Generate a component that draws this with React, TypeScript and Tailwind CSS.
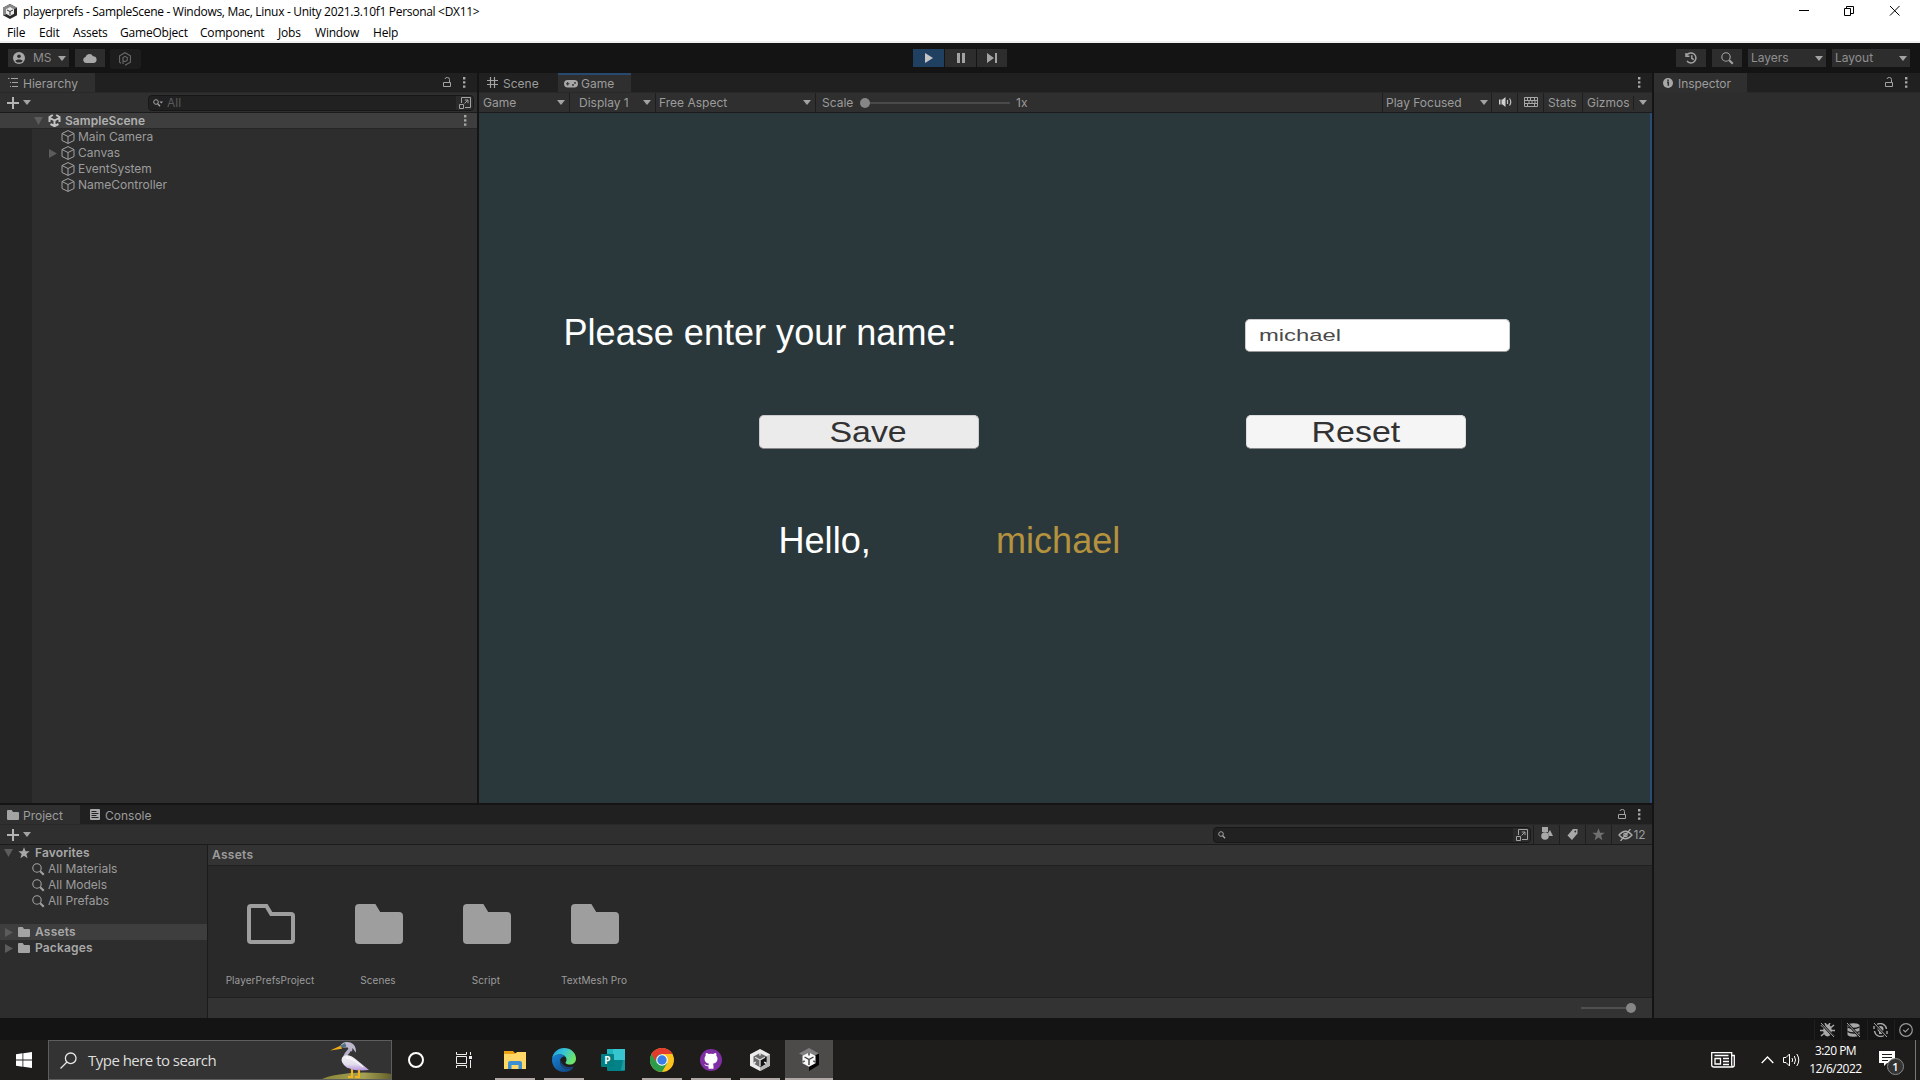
import React from "react";

type P = { className?: string };

const Caret = ({ className = "" }: P) => (
  <svg className={"shrink-0 " + className} width="8" height="5" viewBox="0 0 8 5"><path d="M0 0h8L4 5z" fill="#a3a3a3" /></svg>
);
const TriDown = () => (<svg className="shrink-0" width="9" height="8" viewBox="0 0 9 8"><path d="M0 0h9L4.5 8z" fill="#5c5c5c" /></svg>);
const TriRight = () => (<svg className="shrink-0" width="8" height="9" viewBox="0 0 8 9"><path d="M0 0v9l8-4.5z" fill="#5c5c5c" /></svg>);
const Dots = ({ className = "" }: P) => (
  <svg className={"shrink-0 " + className} width="3" height="11" viewBox="0 0 3 11" fill="#a8a8a8"><path d="M0 0h2.4v2.4H0zM0 4.2h2.4v2.4H0zM0 8.4h2.4v2.4H0z" /></svg>
);
const Lock = ({ className = "" }: P) => (
  <svg className={"shrink-0 " + className} width="8" height="11" viewBox="0 0 8 11" fill="none" stroke="#a3a3a3"><path d="M.5 5.500h7v4h-7zM6.500 5.500V2.500a2 2 0 0 0-2-2h-.5a2 2 0 0 0-2 1.500" /></svg>
);
const Plus = () => (<svg className="shrink-0" width="12" height="12" viewBox="0 0 12 12"><path d="M6 0v12M0 6h12" stroke="#b4b4b4" strokeWidth="2" /></svg>);
const Cube = () => (
  <svg className="shrink-0" width="14" height="14" viewBox="0 0 14 14" fill="none" stroke="#a3a3a3" strokeLinejoin="round"><path d="M7 .6l6 2.9v7L7 13.4l-6-2.9v-7zM1 3.5l6 3 6-3M7 6.5v6.9" /></svg>
);
const Mag = ({ className = "", s = 13, c = "#a3a3a3" }: P & { s?: number; c?: string }) => (
  <svg className={"shrink-0 " + className} width={s} height={s} viewBox="0 0 13 13" fill="none" stroke={c}><circle cx="5" cy="5" r="4.2" strokeWidth="1.1" /><path d="M8.2 8.2l3.6 3.6" strokeWidth="2" /></svg>
);
const FolderSm = ({ className = "" }: P) => (
  <svg className={"shrink-0 " + className} width="12" height="10" viewBox="0 0 12 10" fill="#a3a3a3"><path d="M0 1a1 1 0 0 1 1-1h3.7L6 2h5a1 1 0 0 1 1 1v6a1 1 0 0 1-1 1H1a1 1 0 0 1-1-1z" /></svg>
);
const Popout = () => (
  <svg className="shrink-0" width="12" height="12" viewBox="0 0 12 12" fill="none" stroke="#a3a3a3"><path d="M2.5 6V.5h9v10H6M.5 7.5h4v4h-4zM5.5 6.5L9 3M5.8 3h3.2v3.2" /></svg>
);
const Star = ({ c = "#a8a8a8", s = 12 }: { c?: string; s?: number }) => (
  <svg className="shrink-0" width={s} height={s} viewBox="0 0 12 12" fill={c}><path d="M6 .3l1.6 4h4.1L8.4 6.9l1.2 4.4L6 8.8l-3.6 2.5 1.2-4.4L.3 4.3h4.1z" /></svg>
);
const UnityMark = () => (
  <svg className="shrink-0" width="13" height="13" viewBox="0 0 13 13" fill="none" stroke="#c4c4c4" strokeWidth="2"><path d="M6.5 6.5V12M6.5 6.5L2 4M6.5 6.5L11 4M4.8 1L1.5 3v5M8.2 1l3.3 2v5M2.5 10l4 2.2 4-2.2" /></svg>
);
const BigFolder = ({ open = false }: { open?: boolean }) => (
  <svg width="48" height="40" viewBox="0 0 48 40">
    {open ? (
      <path d="M2 4a2 2 0 0 1 2-2h15.4l4.8 8H44a2 2 0 0 1 2 2v24a2 2 0 0 1-2 2H4a2 2 0 0 1-2-2z" fill="none" stroke="#9e9e9e" strokeWidth="4" />
    ) : (
      <path d="M0 4a4 4 0 0 1 4-4h16.4l4.8 8H44a4 4 0 0 1 4 4v24a4 4 0 0 1-4 4H4a4 4 0 0 1-4-4z" fill="#9e9e9e" />
    )}
  </svg>
);

/* Unity Hub: pale hexagon frame around a dark cube */
const HubIcon = () => (
  <svg className="shrink-0" width="20" height="22" viewBox="0 0 20 22">
    <path d="M10 0l10 5.300v11.400L10 22 0 16.700V5.300z" fill="#ececec" />
    <path d="M20 5.300v11.400L10 22v-5l6-3.300V7.500z" fill="#b5b5b5" />
    <path d="M10 4l6.500 3.600v7L10 18.200l-6.500-3.600v-7z" fill="#6a6a6a" />
    <path d="M10 11l6.500-3.400v7L10 18.200z" fill="#111" />
    <path d="M10 11v6.500M10 11L5 8.200M10 11l5-2.800" stroke="#ddd" strokeWidth="1.300" />
    <path d="M10 4v2.600M3.500 14.500l2.300-1.400M16.500 14.500l-2.300-1.400" stroke="#ececec" strokeWidth="1.500" />
  </svg>
);

/* Unity Editor: white cube with a grey roof and a hard black shadow */
const EditorIcon = () => (
  <svg className="shrink-0" width="20" height="23" viewBox="0 0 20 23">
    <path d="M10 0l10 5.500-4 2L10 4.500 4 7.500l-4-2z" fill="#808080" />
    <path d="M20 5.500V17l-10 6v-5l6-3.500v-7z" fill="#050505" />
    <path d="M10 4.500l6.500 3.300v7.400L10 18.700l-6.500-3.500V7.800z" fill="#f8f8f8" />
    <path d="M10 11.500V17M10 11.500L5.500 9M10 11.500L14.500 9" stroke="#3c3c3c" strokeWidth="1.400" />
    <path d="M10 4.500v3M3.500 14l2.200-1M16.500 14l-2.200-1" stroke="#555" strokeWidth="1.600" />
  </svg>
);

const TitleIcon = () => (
  <svg className="ml-[3px] shrink-0" width="14" height="15" viewBox="0 0 14 15">
    <path d="M7 0l7 3.8v7.4L7 15l-7-3.8V3.8z" fill="#292929" />
    <path d="M0 3.8L7 0l7 3.8-3 1.5-4-1.6-4 2v5L0 11z" fill="#888" />
    <path d="M7 3l4 2.2v4.6L7 12 3 9.8V5.2z" fill="#ececec" />
    <path d="M7 7.5V11M7 7.5L4 6M7 7.5L10 6" stroke="#333" strokeWidth="1" />
  </svg>
);

function TitleBar() {
  const menus: [string, string][] = [
    ["File", "w-[32px]"], ["Edit", "w-[34px]"], ["Assets", "w-[47px]"], ["GameObject", "w-[80px]"],
    ["Component", "w-[78px]"], ["Jobs", "w-[37px]"], ["Window", "w-[58px]"], ["Help", "w-[40px]"],
  ];
  return (
    <header className="h-[43px] shrink-0 border-b-2 border-[#f0f0f0] bg-white font-['Open_Sans',sans-serif] text-[12px] text-black">
      <div className="flex h-[22px] items-center">
        <TitleIcon />
        <span className="ml-[6px] tracking-[-0.300px] whitespace-nowrap pt-[2px]">playerprefs - SampleScene - Windows, Mac, Linux - Unity 2021.3.10f1 Personal &lt;DX11&gt;</span>
        <svg className="mr-[19px] ml-auto" width="102" height="12" viewBox="0 0 102 12" fill="none" stroke="#000">
          <path d="M0 5.5h10M45.5 3.5h6v7h-6zM47.5 3.5v-2h7v7h-3M91 1l9.5 9.5M100.500 1L91 10.500" />
        </svg>
      </div>
      <div className="flex h-[19px] items-center pl-[7px]">
        {menus.map(([m, w]) => (<span key={m} className={"shrink-0 whitespace-nowrap tracking-[-0.200px] pt-[3px] " + w}>{m}</span>))}
      </div>
    </header>
  );
}

function MainToolbar() {
  return (
    <div className="grid h-[30px] shrink-0 grid-cols-[913px_94px_1fr] items-start bg-[#141414] pt-[6px] text-[12px] text-[#8f8f8f]">
      <div className="flex pl-2">
        <div className="flex h-[18px] w-[61px] items-center bg-[#2d2d2d] pl-[5px]">
          <svg width="12" height="12" viewBox="0 0 12 12"><circle cx="6" cy="6" r="6" fill="#a8a8a8" /><circle cx="6" cy="4.3" r="1.8" fill="#2d2d2d" /><path d="M2.300 9c1-2 6.400-2 7.400 0-1.800 2-5.600 2-7.400 0z" fill="#2d2d2d" /></svg>
          <span className="ml-2 w-[25px]">MS</span><Caret />
        </div>
        <div className="ml-[6px] flex h-[18px] w-[30px] items-center justify-center bg-[#2d2d2d]">
          <svg width="14" height="10" viewBox="0 0 14 10" fill="#a8a8a8"><path d="M3 10a3 3 0 0 1-.5-5.900A4 4 0 0 1 10 3.300a3.400 3.400 0 0 1 1 6.700z" /></svg>
        </div>
        <div className="ml-[5px] flex h-[20px] w-[31px] items-center justify-center rounded-[3px] bg-[#1d1d1d]">
          <svg className="-translate-x-px" width="12" height="14" viewBox="0 0 12 14" fill="none" stroke="#6a6a6a" strokeWidth="1.100"><path d="M2 11.300L.6 10.300v-6.600L6 .700l5.400 3v6.600L6 13.300M4 12V5.500L6 4.300l2.200 1.200v3L6 9.700 4 8.600" /></svg>
        </div>
      </div>
      <div className="flex gap-px">
        <div className="flex h-[18px] w-[31px] items-center justify-center bg-[#1f4061]"><svg width="8" height="10" viewBox="0 0 8 10"><path d="M0 0v10l8-5z" fill="#c4c4c4" /></svg></div>
        <div className="flex h-[18px] w-[31px] items-center justify-center bg-[#2d2d2d]"><svg width="8" height="10" viewBox="0 0 8 10"><path d="M0 0h3v10H0zM5 0h3v10H5z" fill="#a3a3a3" /></svg></div>
        <div className="flex h-[18px] w-[30px] items-center justify-center bg-[#2d2d2d]"><svg width="10" height="10" viewBox="0 0 10 10"><path d="M0 0v10l7-5zM8 0h2v10H8z" fill="#a3a3a3" /></svg></div>
      </div>
      <div className="flex justify-end gap-[6px] pr-[10px]">
        <div className="flex h-[18px] w-[30px] items-center justify-center bg-[#2d2d2d]">
          <svg width="13" height="12" viewBox="0 0 13 12" fill="none" stroke="#a3a3a3" strokeWidth="1.500"><path d="M1.700 3.200A5 5 0 1 1 2 9M1 1v3.200h3.500M6.800 3.300v3l2 1.300" /></svg>
        </div>
        <div className="flex h-[18px] w-[30px] items-center justify-center bg-[#2d2d2d]"><Mag /></div>
        <div className="flex h-[18px] w-[78px] items-center justify-between bg-[#2d2d2d] pr-[3px] pl-[3px]"><span>Layers</span><Caret /></div>
        <div className="flex h-[18px] w-[78px] items-center justify-between bg-[#2d2d2d] pr-[3px] pl-[3px]"><span>Layout</span><Caret /></div>
      </div>
    </div>
  );
}

const SearchSmall = ({ caret = false }: { caret?: boolean }) => (
  <svg className="shrink-0" width="10" height="8" viewBox="0 0 10 8" fill="none" stroke="#a3a3a3"><circle cx="3" cy="3" r="2.300" /><path d="M4.700 4.700L7 7.200" strokeWidth="1.300" />{caret && <path d="M6.500 2.500h3.500L8.250 4.500z" fill="#a3a3a3" stroke="none" />}</svg>
);

function Hierarchy() {
  const rows = [["Main Camera", false], ["Canvas", true], ["EventSystem", false], ["NameController", false]] as const;
  return (
    <section className="flex w-[477px] shrink-0 flex-col bg-[#2d2d2d] text-[#9c9c9c]">
      <div className="flex h-[19px] items-center bg-[#202020]">
        <div className="flex h-[19px] w-[95px] items-center bg-[#2f2f2f] pl-2">
          <svg width="10" height="9" viewBox="0 0 10 9" stroke="#a3a3a3"><path d="M0 .5h1.500M3 .5h7M2 4.500h1M4 4.500h6M2 8.500h1M4 8.500h6" /></svg>
          <span className="ml-[5px] pt-[2px]">Hierarchy</span>
        </div>
        <Lock className="ml-auto" /><Dots className="mr-[11px] ml-[12px]" />
      </div>
      <div className="flex h-[21px] items-center border-t border-b border-t-[#292929] border-b-[#1b1b1b] bg-[#2f2f2f] pl-[7px]">
        <Plus /><Caret className="ml-[4px]" />
        <div className="ml-[117px] flex h-[16px] w-[326px] items-center overflow-hidden rounded-[4px] border border-[#171717] bg-[#212121] pl-1 text-[#5a5a5a]">
          <SearchSmall caret /><span className="ml-[4px]">All</span>
          <div className="ml-auto flex h-[15px] w-[17px] items-center justify-center bg-[#2b2b2b]"><Popout /></div>
        </div>
      </div>
      <div className="flex grow">
        <div className="flex w-full flex-col bg-[linear-gradient(to_right,#252525_32px,#2d2d2d_32px)]">
          <div className="flex h-[16px] items-center border-b border-[#262626] bg-[#3e3e3e] pl-[34px] font-semibold text-[#b0b0b0]">
            <TriDown /><span className="w-[5px]" /><UnityMark /><span className="ml-1 tracking-[0.050px]">SampleScene</span><Dots className="mr-[10px] ml-auto" />
          </div>
          {rows.map(([name, exp]) => (
            <div key={name} className="flex h-[16px] items-center pl-[49px]">
              <span className="w-[12px]">{exp && <TriRight />}</span><Cube /><span className="ml-[3px]">{name}</span>
            </div>
          ))}
        </div>
      </div>
    </section>
  );
}

function GameView() {
  return (
    <section className="flex w-[1173px] shrink-0 flex-col bg-[#2a383c] text-[#9c9c9c]">
      <div className="flex h-[19px] items-center bg-[#202020]">
        <div className="flex w-[79px] items-center pl-2">
          <svg width="11" height="11" viewBox="0 0 11 11" stroke="#a3a3a3" strokeWidth="1.200"><path d="M3.500 0v11M7.500 0v11M0 3.500h11M0 7.500h11" /></svg>
          <span className="ml-[5px] pt-[2px]">Scene</span>
        </div>
        <div className="flex h-[19px] w-[73px] items-center border-t-2 border-[#27496d] bg-[#2f2f2f] pl-[6px]">
          <svg width="14" height="8" viewBox="0 0 14 8"><rect width="14" height="7.500" rx="3.700" fill="#a8a8a8" /><path d="M2 3.800h3.400M3.700 2v3.500" stroke="#2d2d2d" strokeWidth="1" /><circle cx="9" cy="5" r=".9" fill="#2d2d2d" /><circle cx="11" cy="2.900" r=".9" fill="#2d2d2d" /></svg>
          <span className="ml-[3px] pt-px">Game</span>
        </div>
        <Dots className="mr-[11px] ml-auto" />
      </div>
      <div className="flex h-[21px] items-stretch border-t border-b border-t-[#292929] border-b-[#1b1b1b] bg-[#2f2f2f] text-[12px] *:flex *:shrink-0 *:items-center *:border-[#1e1e1e]">
        <div className="w-[91px] justify-between border-r pr-1 pl-1"><span>Game</span><Caret /></div>
        <div className="w-[86px] justify-between border-r pr-1 pl-[9px]"><span>Display 1</span><Caret /></div>
        <div className="w-[160px] justify-between border-r pr-1 pl-[3px]"><span>Free Aspect</span><Caret /></div>
        <div className="pl-[6px]">
          <span className="w-[38px]">Scale</span>
          <span className="h-[10px] w-[10px] rounded-full bg-[#868686]" /><span className="h-[2px] w-[140px] bg-[#4a4a4a]" />
          <span className="ml-[6px]">1x</span>
        </div>
        <div className="ml-auto w-[110px] justify-between border-r border-l pr-[3px] pl-[3px]"><span>Play Focused</span><Caret /></div>
        <div className="w-[26px] justify-center border-r">
          <svg className="translate-x-px -translate-y-px" width="13" height="10" viewBox="0 0 13 10"><path d="M0 2.500h1.500v5H0zM2.500 2.500h1L6.500 0v10L3.500 7.500h-1z" fill="#d0d0d0" /><path d="M8.500 3v4M10.500 1.500q2.500 3.500 0 7" stroke="#c0c0c0" fill="none" strokeWidth="1.200" /></svg>
        </div>
        <div className="w-[26px] justify-center border-r">
          <svg className="-translate-y-px" width="14" height="10" viewBox="0 0 14 10" fill="none" stroke="#a8a8a8"><path d="M.5.500h13v9H.5zM.5 3.500h13M.5 6.500h13M3.500.500v3M6.500.500v3M10.500.500v3M5 3.500v3M8 3.500v3M11 3.500v3M3.500 6.500v3M10.500 6.500v3" /></svg>
        </div>
        <div className="w-[39px] border-r pl-[4px]">Stats</div>
        <div className="w-[69px] pl-[4px]"><span className="w-[46px]">Gizmos</span><span className="h-[14px] w-px bg-[#1e1e1e]" /><Caret className="ml-[5px]" /></div>
      </div>
      <div className="flex grow flex-col border-r-2 border-[#2c4a78] bg-[#2a383c] pt-[205px] font-['Liberation_Sans',sans-serif]">
        <div className="flex h-[34px] items-center">
          <span className="ml-[84.500px] w-[681.500px] pb-[4px] text-[36.100px] leading-[34px] whitespace-nowrap text-white">Please enter your name:</span>
          <div className="flex h-[33px] w-[265px] items-center rounded-[5px] border border-b-[#999] border-[#ccc] bg-white pt-px pl-[13px] text-[17px] text-[#4a4a4a]">
            <span className="inline-block origin-left scale-x-[1.400]">michael</span>
          </div>
        </div>
        <div className="mt-[63px] flex h-[34px] items-center pl-[279.500px]">
          <button className="flex h-[34px] w-[220px] items-center justify-center rounded-[5px] border border-[#ccc] border-b-[#888] bg-[#ebebeb] pt-px text-[29px] leading-none text-[#323232]"><span className="inline-block scale-x-[1.170]">Save</span></button>
          <button className="ml-[267px] flex h-[34px] w-[220px] items-center justify-center rounded-[5px] border border-[#ddd] border-b-[#888] bg-[#f5f5f5] pt-px text-[29px] leading-none text-[#323232]"><span className="inline-block scale-x-[1.170]">Reset</span></button>
        </div>
        <div className="mt-[72px] flex pl-[299.500px] text-[36.100px] leading-[40px]">
          <span className="w-[217.500px] text-white">Hello,</span><span className="text-[#b4923e]">michael</span>
        </div>
      </div>
    </section>
  );
}

function Project() {
  return (
    <section className="flex h-[213px] flex-col bg-[#2d2d2d] text-[#9c9c9c]">
      <div className="flex h-[19px] items-center bg-[#202020]">
        <div className="flex h-[19px] w-[80px] items-center bg-[#2f2f2f] pl-[7px]"><FolderSm /><span className="ml-1 pt-[2px]">Project</span></div>
        <svg className="ml-[10px]" width="10" height="11" viewBox="0 0 10 11"><rect width="10" height="11" rx="1" fill="#a8a8a8" /><path d="M1.500 2.500h5M1.500 4.500h7M1.500 6.500h5M1.500 8.500h7" stroke="#222" /></svg>
        <span className="ml-[5px] pt-[2px]">Console</span>
        <Lock className="ml-auto" /><Dots className="mr-[11px] ml-[12px]" />
      </div>
      <div className="flex h-[21px] shrink-0 items-center border-t border-b border-t-[#292929] border-b-[#1b1b1b] bg-[#2f2f2f] pl-[7px]">
        <Plus /><Caret className="ml-[4px]" />
        <div className="ml-auto flex h-[16px] w-[318px] items-center overflow-hidden rounded-[4px] border border-[#171717] bg-[#212121] pl-1">
          <SearchSmall /><div className="ml-auto flex h-[15px] w-[17px] items-center justify-center bg-[#2b2b2b]"><Popout /></div>
        </div>
        <div className="ml-[2px] flex h-[19px] *:flex *:h-full *:items-center *:justify-center *:border-l *:border-[#1e1e1e]">
          <div className="w-[26px]"><svg className="-translate-y-px" width="12" height="13" viewBox="0 0 12 13" fill="#a8a8a8"><path d="M1 0h6v5H1z" /><circle cx="4" cy="9" r="3.800" /><path d="M9 3l3 6H8L7 6z" /></svg></div>
          <div className="w-[26px]"><svg width="11" height="11" viewBox="0 0 11 11"><path d="M6 0h4.500v4.500L5 11 .500 6.500z" fill="#a8a8a8" /><circle cx="8.300" cy="2.500" r=".9" fill="#2f2f2f" /></svg></div>
          <div className="w-[26px]"><Star c="#707070" s={13} /></div>
          <div className="w-[41px]"><svg width="15" height="12" viewBox="0 0 15 12" fill="none" stroke="#a8a8a8" strokeWidth="1.300"><path d="M1 6q6.500-7.500 13 0-6.500 7.500-13 0zM12.500 0l-10 12" /><circle cx="7.500" cy="6" r="1.700" /></svg><span>12</span></div>
        </div>
      </div>
      <div className="flex grow">
        <div className="flex w-[208px] shrink-0 flex-col border-r border-[#1b1b1b]">
          <div className="flex h-[16px] items-center pl-1 font-semibold text-[#a8a8a8]"><TriDown /><span className="w-[5px]" /><Star /><span className="ml-[5px] tracking-[0.150px]">Favorites</span></div>
          {["All Materials", "All Models", "All Prefabs"].map((t) => (<div key={t} className="flex h-[16px] items-center pl-[32px]"><Mag /><span className="ml-[3px]">{t}</span></div>))}
          <div className="mt-[15px] flex h-[16px] items-center bg-[#3e3e3e] pl-[5px] font-semibold tracking-[0.200px] text-[#a8a8a8]"><TriRight /><FolderSm className="mr-[5px] ml-[5px]" />Assets</div>
          <div className="flex h-[16px] items-center pl-[5px] font-semibold tracking-[0.150px] text-[#a8a8a8]"><TriRight /><FolderSm className="mr-[5px] ml-[5px]" />Packages</div>
        </div>
        <div className="flex grow flex-col">
          <div className="flex h-[21px] items-center border-b border-[#202020] bg-[#333] pl-1 font-semibold tracking-[0.300px]">Assets</div>
          <div className="flex grow bg-[#292929] pt-[38px] pl-[8px]">
            {["PlayerPrefsProject", "Scenes", "Script", "TextMesh Pro"].map((n, i) => (
              <div key={n} className="flex w-[108px] flex-col items-center">
                <span className="ml-[2px]"><BigFolder open={i === 0} /></span><span className="mt-[29px] text-[10px] leading-[14px] tracking-[0.080px]">{n}</span>
              </div>
            ))}
          </div>
          <div className="flex h-[21px] items-center justify-end border-t border-[#202020] bg-[#333] pr-[16px]">
            <span className="h-[2px] w-[45px] bg-[#505050]" /><span className="h-[10px] w-[10px] rounded-full bg-[#868686]" />
          </div>
        </div>
      </div>
    </section>
  );
}

function Inspector() {
  return (
    <section className="w-[266px] shrink-0 bg-[#2d2d2d] text-[#9c9c9c]">
      <div className="flex h-[19px] items-center bg-[#202020]">
        <div className="flex h-[19px] w-[93px] items-center bg-[#2f2f2f] pl-[9px]">
          <svg width="10" height="10" viewBox="0 0 10 10"><circle cx="5" cy="5" r="5" fill="#a8a8a8" /><path d="M4 4.200h1.300v3.500M5 1.600v1.500" stroke="#2d2d2d" strokeWidth="1.500" fill="none" /></svg>
          <span className="ml-[5px] pt-[2px] tracking-[-0.050px]">Inspector</span>
        </div>
        <Lock className="ml-auto" /><Dots className="mr-[12px] ml-[12px]" />
      </div>
      <div className="h-px w-[173px] ml-auto bg-[#282828]" />
    </section>
  );
}

function StatusBar() {
  return (
    <div className="flex h-[22px] shrink-0 items-center justify-end bg-[#141414] pt-px *:flex *:h-[20px] *:w-[26.500px] *:items-center *:justify-center *:border-l *:border-[#1f1f1f]">
      <div><svg width="15" height="14" viewBox="0 0 15 14"><ellipse cx="7.500" cy="7.500" rx="4.300" ry="6" fill="#a8a8a8" /><path d="M1 2l3 2.500M14 2l-3 2.500M0 7.500h15M1 13l3-2.500M14 13l-3-2.500M5 0l1.500 2.500M10 0L8.500 2.500" stroke="#a8a8a8" strokeWidth="1.600" /><path d="M1 0l13 14" stroke="#141414" strokeWidth="2.500" /><path d="M1 0l13 14" stroke="#a8a8a8" strokeWidth="1" /></svg></div>
      <div><svg className="-translate-x-px" width="15" height="14" viewBox="0 0 15 14"><path d="M1.500 2.500c0-3 12-3 12 0v9c0 3-12 3-12 0z" fill="#a8a8a8" /><path d="M1.500 4q6 3 12 0M1.500 8.500q6 3 12 0" stroke="#141414" fill="none" strokeWidth="1.300" /><path d="M1 0l13 14" stroke="#141414" strokeWidth="2.500" /><path d="M1 0l13 14" stroke="#a8a8a8" strokeWidth="1" /></svg></div>
      <div><svg width="15" height="14" viewBox="0 0 15 14"><path d="M4 1.500A6.300 6.300 0 0 1 13.500 6M11 12.500A6.300 6.300 0 0 1 1.500 8M1 3v3M14 8v3" fill="none" stroke="#a8a8a8" strokeWidth="1.400" /><circle cx="7.500" cy="6" r="3" fill="#a8a8a8" /><path d="M6 8h3v3H6z" fill="#a8a8a8" /><path d="M1 0l13 14" stroke="#141414" strokeWidth="2.500" /><path d="M1 0l13 14" stroke="#a8a8a8" strokeWidth="1" /></svg></div>
      <div><svg className="-translate-x-px" width="14" height="14" viewBox="0 0 14 14" fill="none" stroke="#999" strokeWidth="1.200"><circle cx="7" cy="7" r="6.300" /><path d="M4.300 7l2 2 3.500-3.700" /></svg></div>
    </div>
  );
}

const Heron = () => (
  <svg className="ml-auto h-[38px] shrink-0" width="69" height="38" viewBox="0 0 69 38">
    <defs>
      <linearGradient id="hill" x1="0" x2="1"><stop offset="0" stopColor="#8a8538" /><stop offset=".6" stopColor="#a6a254" /><stop offset="1" stopColor="#65612b" /></linearGradient>
      <linearGradient id="wing" x1="0" y1="0" x2="0" y2="1"><stop offset="0" stopColor="#f5f3f8" /><stop offset=".6" stopColor="#e2dcec" /><stop offset="1" stopColor="#b597dc" /></linearGradient>
    </defs>
    <path d="M0 38Q14 32 42 31.500 58 31.500 69 33v5z" fill="url(#hill)" />
    <path d="M8 9.500L19 4.500l1 3.300z" fill="#efad1c" />
    <path d="M30 28v8h-4M37 28v8h-4" stroke="#f2b522" strokeWidth="2.200" fill="none" />
    <path d="M25 4c4 1 4 4 1 7s-4 5-3 9" stroke="#b9b1c9" strokeWidth="3.600" fill="none" />
    <path d="M18.500 5c1-4.500 9-5.500 12.500-2 2.500 2 3 5 3 8.500-1.500-1-2-3-3.500-4.500L30 11l-2.500-4c-3-1.500-6 1-9-2z" fill="#bdb6cc" />
    <path d="M20.500 16c4-3.500 9-1 13 2l13.500 11c-8 1-19 .500-24-4-3-3-4.500-6-2.500-9z" fill="url(#wing)" />
    <path d="M24 17c6 0 12 5 17 9" stroke="#fff" fill="none" />
    <path d="M18 5l5-3 1.500 3.500-4 1z" fill="#4c7184" />
  </svg>
);

const Explorer = () => (
  <svg width="22" height="18" viewBox="0 0 22 18"><path d="M0 0h9l2 2H22v16H0z" fill="#e8a317" /><path d="M0 3h11l2-2h9v17H0z" fill="#ffd767" /><path d="M4 18v-6a2 2 0 0 1 2-2h10a2 2 0 0 1 2 2v6h-3.500v-4h-7v4z" fill="#3c8fd0" /></svg>
);
const Edge = () => (
  <svg width="24" height="24" viewBox="0 0 24 24">
    <defs>
      <linearGradient id="edge-top" x1="0" y1="0" x2="1" y2=".4"><stop offset="0" stopColor="#1c9bdc" /><stop offset=".5" stopColor="#35c3d9" /><stop offset="1" stopColor="#6fe36a" /></linearGradient>
      <linearGradient id="edge-low" x1="0" y1="0" x2="1" y2="1"><stop offset="0" stopColor="#1484d8" /><stop offset="1" stopColor="#123f7a" /></linearGradient>
    </defs>
    <path d="M0 11C1 4 6 0 12 0c7 0 12 5 12 10.500 0 4-3 6-6 6-2.500 0-4.500-.8-4.500-1.800 0-.6 1-1 1-2.700C14.500 8 11 6.500 8 6.500 4 6.500 1 8.500 0 11z" fill="url(#edge-top)" />
    <path d="M0 12c.5-4 4-5.500 8-5.500 2 0 4 .8 5.300 2C10 8 8 10.500 8 13.500c0 4.500 4 7.500 8 7.500 2 0 4-.6 5.500-1.500-2 3-5.500 4.500-9.500 4.500C5 24 0 18.500 0 12z" fill="url(#edge-low)" />
    <path d="M8.200 12c-.8 5 3.500 8.800 7.800 8.800 2.500 0 4.500-.8 6-2.300-7 2.500-12-1-13.800-6.500z" fill="#174c8d" />
  </svg>
);
const Publisher = () => (
  <svg width="24" height="22" viewBox="0 0 24 22"><rect x="6" width="18" height="22" rx="1" fill="#038387" /><path d="M6 0h12v11H6z" fill="#1fb5bf" /><path d="M12 0h12v11H12z" fill="#37c6d0" /><path d="M22 11h2v10h-4z" fill="#1a9ba1" /><rect y="5" width="13" height="13" rx="1" fill="#027f83" /><text x="6.500" y="15" textAnchor="middle" fontSize="10" fontWeight="700" fill="#fff" fontFamily="Open Sans, sans-serif">P</text></svg>
);
const Chrome = () => (
  <svg width="24" height="24" viewBox="0 0 24 24"><circle cx="12" cy="12" r="12" fill="#fcc31e" /><path d="M1.600 6A12 12 0 0 0 12 24l5.200-9L12 12l-5.200 3z" fill="#2a9c4a" /><path d="M1.600 6L6.800 15 12 6z" fill="#2a9c4a" /><path d="M1.600 6A12 12 0 0 1 22.400 6H12a6 6 0 0 0-5.600 4l-.4 3.500z" fill="#e33b2e" /><circle cx="12" cy="12" r="5.800" fill="#fff" /><circle cx="12" cy="12" r="4.700" fill="#3a7de8" /></svg>
);
const GitHub = () => (
  <svg width="22" height="22" viewBox="0 0 22 22"><circle cx="11" cy="11" r="11" fill="#7f2fa3" /><path d="M8.500 19.800v-2.600c-3 .6-3.500-1.400-4.500-2 1.700-.3 1.900 1.500 4.500 1 .1-.8.400-1.100.700-1.400C6.500 14.400 4.500 13 4.500 9.800c0-1.300.400-2.300 1.200-3.100-.2-.9-.1-1.900.2-2.800 1 0 2 .5 2.900 1.200a9 9 0 0 1 4.400 0c.9-.7 1.900-1.200 2.900-1.200.3.900.400 1.900.2 2.800.8.800 1.200 1.800 1.200 3.100 0 3.200-2 4.600-4.700 5 .5.500.7 1.100.7 2v3z" fill="#fff" /></svg>
);

function Taskbar() {
  const apps: { icon: React.ReactNode; run: boolean }[] = [
    { icon: <Explorer />, run: true }, { icon: <Edge />, run: true }, { icon: <Publisher />, run: false },
    { icon: <Chrome />, run: true }, { icon: <GitHub />, run: true }, { icon: <HubIcon />, run: true },
  ];
  return (
    <footer className="flex h-[40px] shrink-0 items-stretch bg-[#1e1d1c] font-['Open_Sans',sans-serif] text-white">
      <div className="flex w-[48px] items-center justify-center"><svg width="16" height="16" viewBox="0 0 16 16" fill="#fff"><path d="M0 2.200l6.500-.9v6.300H0zM7.300 1.200L16 0v7.600H7.300zM0 8.400h6.500v6.300L0 13.800zM7.300 8.400H16V16l-8.700-1.200z" /></svg></div>
      <div className="flex w-[344px] items-center border border-[#5e5e5e] bg-[#333]">
        <svg className="ml-[11px]" width="17" height="17" viewBox="0 0 17 17" fill="none" stroke="#e8e8e8" strokeWidth="1.300"><circle cx="10.700" cy="6.300" r="5.300" /><path d="M7 10L.500 16.500" /></svg>
        <span className="ml-[11px] text-[15px] tracking-[-0.520px] whitespace-nowrap text-[#dedede]">Type here to search</span>
        <Heron />
      </div>
      <div className="flex w-[48px] items-center justify-center"><span className="h-[16px] w-[16px] rounded-full border-2 border-white" /></div>
      <div className="flex w-[50px] items-center justify-center pr-[2px]"><svg width="16" height="16" viewBox="0 0 16 16" fill="none" stroke="#eee"><path d="M.5 0v2.500h10V0M.5 4.500h10v7H.5zM.5 16v-2.500h10V16M14.500 0v3M14.500 8v8" /><path d="M13 4h3v3h-3z" fill="#eee" stroke="none" /></svg></div>
      {apps.map((a, i) => (
        <div key={i} className="flex w-[49px] flex-col items-center">
          <div className="flex h-[38px] grow items-center pt-[2px]">{a.icon}</div>
          <div className={a.run ? "h-[2px] w-[40px] bg-[#b0a8a4]" : "h-[2px] w-[40px]"} />
        </div>
      ))}
      <div className="ml-px flex w-[48px] flex-col items-center border-b-2 border-[#b0a8a4] bg-[#4c4b4a]"><div className="flex grow items-center pt-px">
        <EditorIcon /></div></div>
      <div className="ml-auto flex items-center">
        <svg width="24" height="16" viewBox="0 0 24 16" fill="none" stroke="#fff" strokeWidth="1.300"><path d="M20.500 3.500h2.800V13q0 2-2 2H3Q.700 15 .700 13V.700h20V13q0 2 1.500 2M4 6.500h5.500v5.500H4zM3.500 3.500h14M12 6.500h6M12 9.500h6M12 12.500h6" /></svg>
        <svg className="ml-[26px]" width="13" height="8" viewBox="0 0 13 8" fill="none" stroke="#fff" strokeWidth="1.300"><path d="M.7 7l5.800-6 5.800 6" /></svg>
        <svg className="ml-[9px]" width="17" height="14" viewBox="0 0 17 14" fill="none" stroke="#fff"><path d="M.5 4.500H3L6.500 1v12L3 9.500H.500zM9 5q1.300 2 0 4M11.300 3q2.500 4 0 8M13.800 1q4 6 0 12" /></svg>
        <div className="ml-[9px] w-[53px] text-center text-[12px] leading-[18px] tracking-[-0.520px] whitespace-nowrap"><div>3:20 PM</div><div className="tracking-[-0.480px]">12/6/2022</div></div>
        <div className="relative ml-[17px] h-[26px] w-[36px]">
          <svg className="mt-[4px]" width="17" height="16" viewBox="0 0 17 16"><path d="M0 0h16v12H8l-3 3v-3H0z" fill="#fff" /><path d="M3 3.500h10M3 6.500h10M3 9.500h6" stroke="#1e1d1c" /></svg>
          <span className="absolute top-[11px] left-[8px] flex h-[17px] w-[17px] items-center justify-center rounded-full border border-[#8a8a8a] bg-[#333] text-[11px] leading-none font-semibold">1</span>
        </div>
        <span className="mr-[4px] h-full w-px bg-[#777]" />
      </div>
    </footer>
  );
}

export default function App() {
  return (
    <div className="flex h-[1080px] w-[1920px] flex-col overflow-hidden bg-[#141414] font-['Inter',sans-serif] text-[12px] leading-[16px]">
      <TitleBar />
      <MainToolbar />
      <main className="flex h-[945px] shrink-0 gap-[2px]">
        <div className="flex w-[1652px] shrink-0 flex-col gap-[2px]">
          <div className="flex h-[730px] gap-[2px]"><Hierarchy /><GameView /></div>
          <Project />
        </div>
        <Inspector />
      </main>
      <StatusBar />
      <Taskbar />
    </div>
  );
}
